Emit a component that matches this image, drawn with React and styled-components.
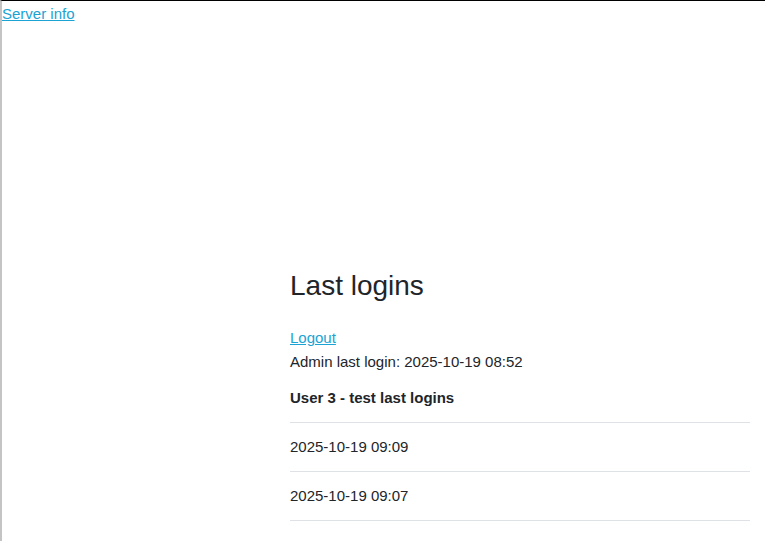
import React from "react";
import styled, { createGlobalStyle } from "styled-components";

const GlobalStyle = createGlobalStyle`
  html, body {
    margin: 0;
    padding: 0;
    background: #fff;
  }
  body {
    font-family: "Liberation Sans", Arial, sans-serif;
    font-size: 15px;
    color: #212529;
  }
`;

const logins = ["2025-10-19 09:09", "2025-10-19 09:07"];

function App() {
  return (
    <>
      <GlobalStyle />
      <Frame>
        <TopLink href="#">Server info</TopLink>
        <Content>
          <Title>Last logins</Title>
          <Link href="#">Logout</Link>
          <Info>Admin last login: 2025-10-19 08:52</Info>
          <UserName>User 3 - test last logins</UserName>
          <List>
            {logins.map((l) => (
              <Row key={l}>{l}</Row>
            ))}
          </List>
        </Content>
      </Frame>
    </>
  );
}

export default App;

const Frame = styled.div`
  box-sizing: border-box;
  height: 541px;
  border-top: 1px solid #000;
  border-left: 2px solid #c4c4c4;
  overflow: hidden;
`;

const Link = styled.a`
  color: #1aa3d3;
  text-decoration: underline;
  font-size: 15px;
  line-height: 24px;
`;

const TopLink = styled(Link)`
  display: block;
  width: fit-content;
  padding-top: 1px;
  line-height: 24px;
`;

const Content = styled.div`
  display: flex;
  flex-direction: column;
  margin-left: 288px;
  width: 460px;
  padding-top: 242px;
`;

const Title = styled.h2`
  margin: 0 0 22px;
  font-size: 28px;
  font-weight: 400;
  line-height: 36px;
`;

const Info = styled.div`
  line-height: 24px;
`;

const UserName = styled.div`
  font-weight: 700;
  line-height: 24px;
  margin-top: 12px;
  padding-bottom: 12px;
  border-bottom: 1px solid #dee2e6;
`;

const List = styled.div`
  display: flex;
  flex-direction: column;
`;

const Row = styled.div`
  line-height: 24px;
  padding: 12px 0;
  border-bottom: 1px solid #dee2e6;
`;
